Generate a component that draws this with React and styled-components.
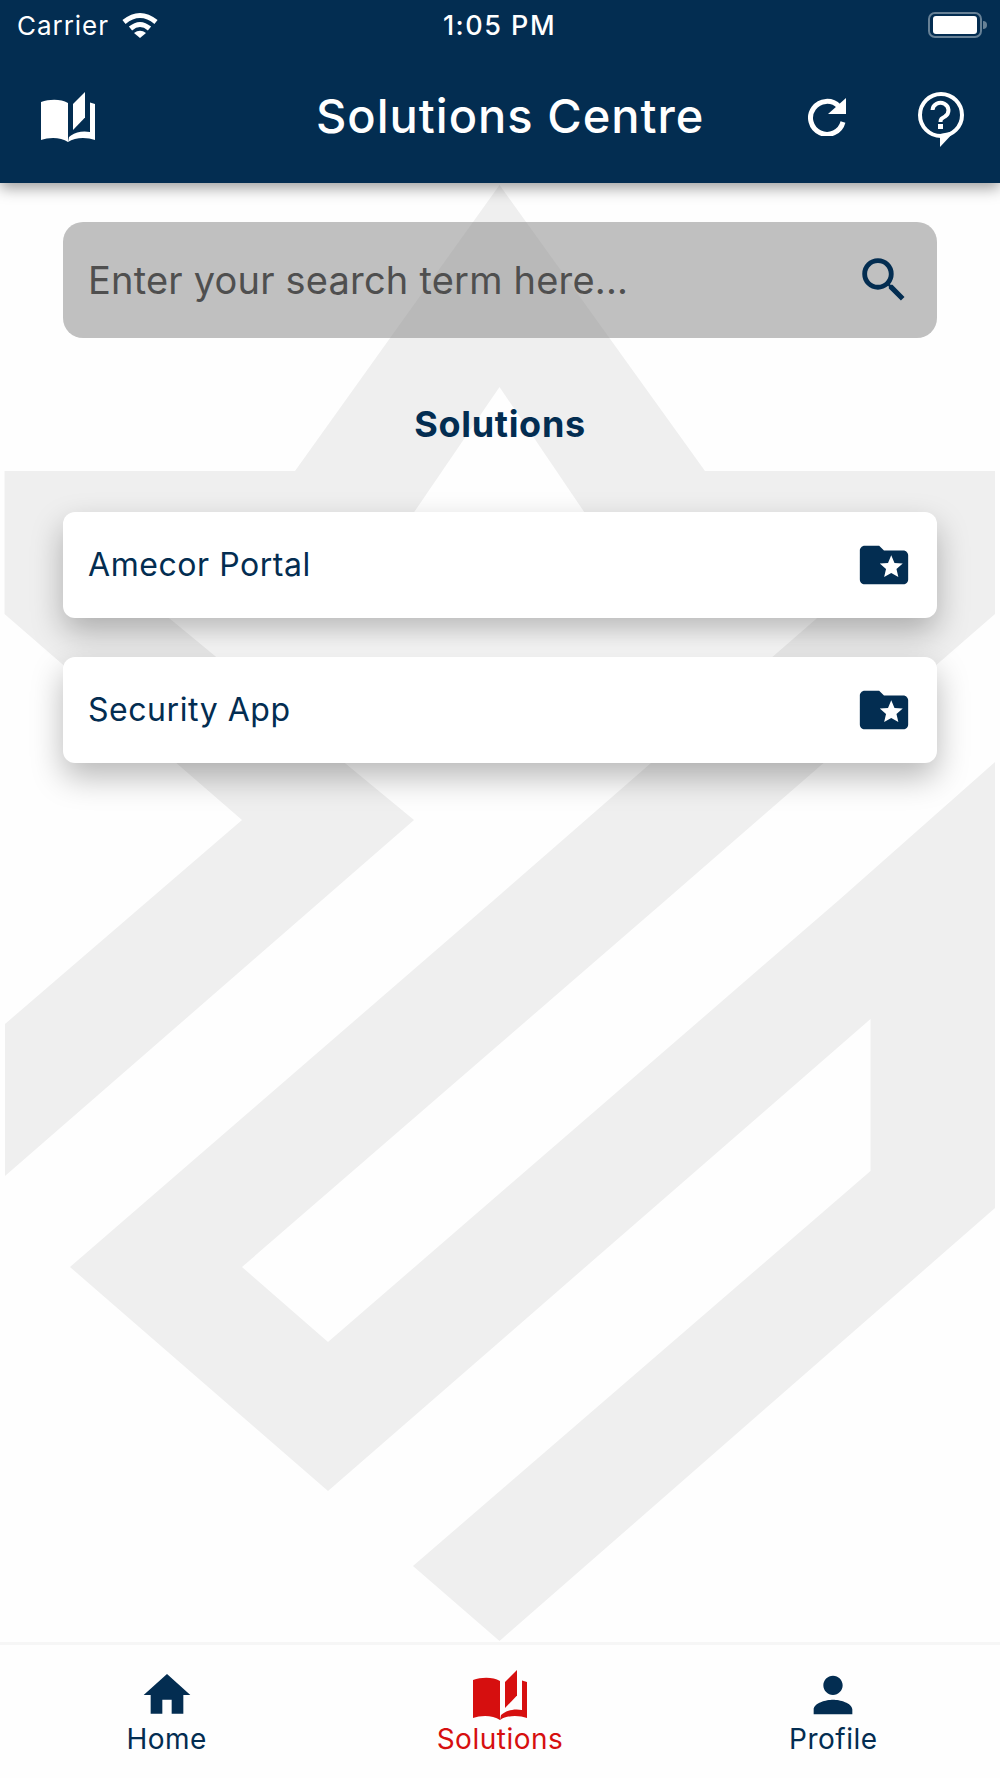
import React from 'react';
import styled, { createGlobalStyle } from 'styled-components';
import { MdSearch, MdFolderSpecial, MdHome, MdPerson } from 'react-icons/md';

const navy = '#032d51';
const red = '#d60f0f';

const logoPoints = `499.5,185 705,471 995,471 995,614 666,900 242,1267 328,1342 839,900 995,762 995,1208
  499.5,1641 413,1566 870.5,1171 870.5,1019 328,1491 70,1267 494,900 816,619 840,590 637,590 499.5,387 361,590
  135,590 414,820 5,1176 5,1024 242,820 4.5,614 4.5,471 295,471`;

const BookIcon = () => (
    <BookSvg viewBox="0 0 54 50">
        <path d="M0 10C9 7 20 7 27 11V47.5V50C20 45 8 45 0 48Z" />
        <path d="M32 12L44 0V25.5L32 38Z" />
        <path d="M27 50C34 45 46 45 54 48V12L49 10.5V40C42 38.5 35 40 30 43.5L28 45Z" />
    </BookSvg>
);

const RefreshIcon = () => (
    <RefreshSvg viewBox="0 0 40 38">
        <path d="M32 8.5A16.5 16.5 0 1 0 36 24" fill="none" stroke="currentColor" strokeWidth="5" />
        <path d="M39 0V16H21Z" fill="currentColor" />
    </RefreshSvg>
);

const HelpIcon = () => (
    <HelpSvg viewBox="0 0 46 55">
        <circle cx="23" cy="23" r="21" fill="none" stroke="currentColor" strokeWidth="4" />
        <path d="M22 55V42L37 39Z" fill="currentColor" />
        <path d="M14.5 18A8 7.5 0 1 1 27 24.5C23.5 26.5 22.5 27 22.5 30" fill="none" stroke="currentColor" strokeWidth="4" />
        <rect x="20" y="32" width="5" height="5" fill="currentColor" />
    </HelpSvg>
);

const WifiIcon = () => (
    <WifiSvg viewBox="0 0 36 26">
        <path d="M2 10Q18 -3 34 10" fill="none" stroke="currentColor" strokeWidth="5" />
        <path d="M8.5 16.5Q18 8.5 27.5 16.5" fill="none" stroke="currentColor" strokeWidth="5" />
        <path d="M12 21Q18 16.5 24 21L18 26Z" fill="currentColor" />
    </WifiSvg>
);

export default function App() {
    return (
        <Page>
            <GlobalStyle />
            <Logo viewBox="0 0 1000 1778">
                <polygon points={logoPoints} />
            </Logo>

            <Header>
                <StatusBar>
                    <Carrier>
                        Carrier
                        <WifiIcon />
                    </Carrier>
                    <Time>1:05 PM</Time>
                    <BatterySlot>
                        <Battery>
                            <BatteryLevel />
                        </Battery>
                    </BatterySlot>
                </StatusBar>
                <NavRow>
                    <BookIcon />
                    <Title>Solutions Centre</Title>
                    <NavActions>
                        <RefreshIcon />
                        <HelpIcon />
                    </NavActions>
                </NavRow>
            </Header>

            <Main>
                <SearchBar>
                    <Placeholder>Enter your search term here...</Placeholder>
                    <MdSearch size={58} color={navy} />
                </SearchBar>
                <SectionTitle>Solutions</SectionTitle>
                <CardList>
                    <Card>
                        <CardName>Amecor Portal</CardName>
                        <MdFolderSpecial size={58} color={navy} />
                    </Card>
                    <Card>
                        <CardName>Security App</CardName>
                        <MdFolderSpecial size={58} color={navy} />
                    </Card>
                </CardList>
            </Main>

            <TabBar>
                <Tab>
                    <TabIcon><MdHome size={56} /></TabIcon>
                    Home
                </Tab>
                <Tab $active>
                    <TabIcon><BookIcon /></TabIcon>
                    Solutions
                </Tab>
                <Tab>
                    <TabIcon><MdPerson size={58} /></TabIcon>
                    Profile
                </Tab>
            </TabBar>
        </Page>
    );
}

const GlobalStyle = createGlobalStyle`
    html, body {
        margin: 0;
        padding: 0;
        background: #fefefe;
    }
    * {
        box-sizing: border-box;
    }
`;

const Page = styled.div`
    position: relative;
    display: flex;
    flex-direction: column;
    width: 1000px;
    height: 1778px;
    overflow: hidden;
    font-family: Inter, "Liberation Sans", sans-serif;
    background: #fefefe;
`;

const Logo = styled.svg`
    position: absolute;
    top: 0;
    left: 0;
    width: 1000px;
    height: 1778px;
    fill: #efefef;
`;

const Header = styled.header`
    position: relative;
    height: 183px;
    color: #fff;
    background: ${navy};
    box-shadow: 0 5px 14px rgba(0, 0, 0, 0.38);
`;

const StatusBar = styled.div`
    display: grid;
    grid-template-columns: 1fr auto 1fr;
    align-items: center;
    height: 50px;
    padding: 0 18px 0 17px;
    font-size: 26px;
    letter-spacing: 0.95px;
`;

const Carrier = styled.div`
    display: flex;
    align-items: center;
    gap: 13px;
`;

const Time = styled.div`
    font-size: 27px;
    font-weight: 500;
    letter-spacing: 1.5px;
`;

const BatterySlot = styled.div`
    display: flex;
    justify-content: flex-end;
`;

const Battery = styled.div`
    position: relative;
    display: flex;
    align-items: center;
    justify-content: center;
    width: 54px;
    height: 26px;
    border: 2px solid rgba(255, 255, 255, 0.4);
    border-radius: 7px;

    &::after {
        content: '';
        position: absolute;
        right: -7px;
        top: 7px;
        width: 4px;
        height: 8px;
        border-radius: 0 4px 4px 0;
        background: rgba(255, 255, 255, 0.4);
    }
`;

const BatteryLevel = styled.div`
    width: 44px;
    height: 18px;
    border-radius: 3px;
    background: #fff;
`;

const WifiSvg = styled.svg`
    width: 36px;
    height: 26px;
`;

const NavRow = styled.div`
    display: flex;
    align-items: center;
    height: 133px;
    padding: 0 36px 0 41px;
`;

const BookSvg = styled.svg`
    flex: none;
    width: 54px;
    height: 50px;
    fill: currentColor;
`;

const RefreshSvg = styled.svg`
    width: 40px;
    height: 38px;
`;

const HelpSvg = styled.svg`
    width: 46px;
    height: 55px;
    margin-top: 6px;
`;

const Title = styled.h1`
    margin: 0 0 2px 221px;
    font-size: 47px;
    font-weight: 500;
    letter-spacing: 1px;
    white-space: nowrap;
`;

const NavActions = styled.div`
    display: flex;
    align-items: center;
    gap: 71px;
    margin-left: auto;
`;

const Main = styled.main`
    position: relative;
    flex: 1;
    padding: 39px 63px 0;
`;

const SearchBar = styled.div`
    display: flex;
    align-items: center;
    justify-content: space-between;
    height: 116px;
    padding: 0 24px 0 25px;
    border-radius: 20px;
    background: rgba(143, 143, 143, 0.56);
`;

const Placeholder = styled.span`
    font-size: 38px;
    letter-spacing: 0.2px;
    color: #4f4f4f;
`;

const SectionTitle = styled.h2`
    margin: 61px 0 63px;
    font-size: 36px;
    font-weight: 700;
    letter-spacing: 0.7px;
    line-height: 50px;
    text-align: center;
    color: ${navy};
`;

const CardList = styled.div`
    display: flex;
    flex-direction: column;
    gap: 39px;
`;

const Card = styled.div`
    display: flex;
    align-items: center;
    justify-content: space-between;
    height: 106px;
    padding: 0 24px 0 25px;
    border-radius: 12px;
    background: #fff;
    box-shadow: 0 14px 32px rgba(0, 0, 0, 0.28);
`;

const CardName = styled.span`
    margin-bottom: 2px;
    font-size: 32px;
    letter-spacing: 0.55px;
    color: ${navy};
`;

const TabBar = styled.nav`
    position: relative;
    display: grid;
    grid-template-columns: repeat(3, 1fr);
    height: 136px;
    padding-top: 21px;
    border-top: 3px solid #f6f6f6;
    background: #fefefe;
`;

const Tab = styled.div`
    display: flex;
    flex-direction: column;
    align-items: center;
    font-size: 28px;
    letter-spacing: 0.5px;
    line-height: 30px;
    color: ${p => (p.$active ? red : navy)};
`;

const TabIcon = styled.div`
    display: flex;
    align-items: center;
    justify-content: center;
    height: 58px;
`;
